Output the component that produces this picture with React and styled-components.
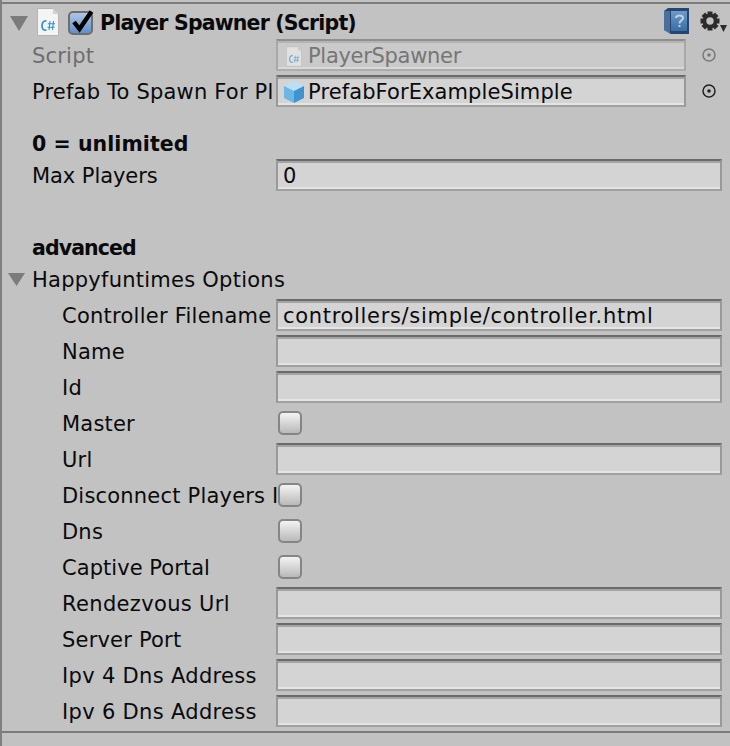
import React from "react";
import styled, { createGlobalStyle } from "styled-components";

const GlobalStyle = createGlobalStyle`
    html, body {
        margin: 0;
        padding: 0;
        background: #c2c2c2;
    }
    body {
        font-family: "DejaVu Sans", sans-serif;
        font-size: 21px;
        letter-spacing: 0.2px;
        color: #0a0a0a;
    }
`;

const Page = styled.div`
    width: 730px;
    height: 746px;
    box-sizing: border-box;
    overflow: hidden;
    padding-top: 2px;
    border-left: 2px solid #7f7f7f;
    background: #c2c2c2;
`;

const Component = styled.div`
    height: 731px;
    box-sizing: border-box;
    border-top: 2px solid #7c7c7c;
    border-bottom: 2px solid #7c7c7c;
`;

const Header = styled.div`
    height: 33px;
    box-sizing: border-box;
    padding-top: 2px;
    display: flex;
    align-items: center;
`;

const Title = styled.div`
    margin-left: 5px;
    padding-top: 2px;
    font-size: 20.5px;
    font-weight: bold;
    letter-spacing: -0.83px;
    white-space: nowrap;
    flex: 1;
`;

const HeaderIcon = styled.svg`
    display: block;
    flex: none;
`;

const Row = styled.div`
    height: 36px;
    display: flex;
    align-items: center;
    padding-left: ${(p) => (p.$indent ? 60 : 30)}px;
`;

const Label = styled.div`
    width: ${(p) => (p.$indent ? 214 : 244)}px;
    flex: none;
    padding-top: 2px;
    white-space: nowrap;
    letter-spacing: ${(p) => p.$tracking ?? 0.2}px;
    color: ${(p) => (p.$disabled ? "#6e6e6e" : "#0a0a0a")};
`;

const Field = styled.div`
    box-sizing: border-box;
    width: ${(p) => (p.$short ? 410 : 446)}px;
    height: 32px;
    flex: none;
    display: flex;
    align-items: center;
    gap: ${(p) => (p.$disabled ? 6 : 3)}px;
    padding: 2px 0 0 ${(p) => (p.$object ? (p.$disabled ? 8 : 5) : 5)}px;
    white-space: nowrap;
    letter-spacing: ${(p) => p.$tracking ?? 0}px;
    color: ${(p) => (p.$disabled ? "#767676" : "#0a0a0a")};
    background: ${(p) => (p.$disabled ? "#cacaca" : "#d4d4d4")};
    border: 2px solid ${(p) => (p.$disabled ? "#a8a8a8" : "#999999")};
    border-top-color: ${(p) => (p.$disabled ? "#8f8f8f" : "#6a6a6a")};
    border-bottom-color: ${(p) => (p.$disabled ? "#adadad" : "#a0a0a0")};
    box-shadow: inset 0 2px 0 ${(p) => (p.$disabled ? "#b4b4b4" : "#a4a4a4")},
        inset 0 -2px 0 ${(p) => (p.$disabled ? "#d8d8d8" : "#e4e4e4")};
`;

const Picker = styled.svg`
    display: block;
    flex: none;
    margin-left: 15px;
    opacity: ${(p) => (p.$disabled ? 0.45 : 1)};
`;

const Checkbox = styled.div`
    box-sizing: border-box;
    width: 24px;
    height: 24px;
    flex: none;
    margin-left: 2px;
    border: 2px solid #858585;
    border-radius: 5px;
    background: linear-gradient(#f3f3f3, #b9b9b9);
`;

const Heading = styled.div`
    height: 28px;
    margin-top: ${(p) => p.$top}px;
    padding: 2px 0 0 30px;
    box-sizing: border-box;
    display: flex;
    align-items: center;
    font-size: 20.5px;
    font-weight: bold;
    letter-spacing: ${(p) => p.$tracking}px;
`;

const FoldRow = styled.div`
    height: 36px;
    display: flex;
    align-items: center;
    gap: 7px;
    padding-left: 6px;
`;

const FoldLabel = styled.div`
    padding-top: 2px;
    letter-spacing: 0.25px;
`;

const HeaderGap = styled.span`
    flex: none;
    width: ${(p) => p.$width}px;
`;

function Triangle({ small }) {
    return (
        <HeaderIcon
            width={small ? 17 : 18}
            height={small ? 14 : 16}
            viewBox="0 0 18 16"
            preserveAspectRatio="none"
            style={{ marginTop: small ? 0 : 2 }}
        >
            <path d="M0 1 H18 L9 16 Z" fill="#7b7b7b" />
        </HeaderIcon>
    );
}

function ScriptIcon({ small }) {
    const w = small ? 16 : 22;
    const h = small ? 21 : 28;
    return (
        <HeaderIcon width={w} height={h} viewBox="0 0 22 28" style={{ opacity: small ? 0.55 : 1 }}>
            <path d="M0.5 0.5 H16 L21.5 6 V27.5 H0.5 Z" fill="#f4f4f4" stroke="#b5b5b5" />
            <path d="M16 0.5 V6 H21.5 Z" fill="#d2d2d2" />
            <path d="M9.5 13 C6 12.5 5 15 5 18 C5 21 6.5 22.5 9.5 22" fill="none" stroke="#2f93c4" strokeWidth="1.7" />
            <path d="M13 13 L12 22 M16.5 13 L15.5 22 M10.8 15.7 H18 M10.5 19.3 H17.6" fill="none" stroke="#2f93c4" strokeWidth="1.1" />
        </HeaderIcon>
    );
}

function EnabledBox() {
    return (
        <HeaderIcon width="27" height="26" viewBox="0 0 27 26" style={{ marginLeft: 9 }}>
            <defs>
                <linearGradient id="enabledFill" x1="0" y1="0" x2="0" y2="1">
                    <stop offset="0" stopColor="#b4c9e4" />
                    <stop offset="1" stopColor="#5f8dc6" />
                </linearGradient>
            </defs>
            <rect x="1" y="3" width="23" height="22" rx="4" fill="url(#enabledFill)" stroke="#6e6e6e" strokeWidth="2" />
            <path d="M6 13 L11.5 20 L23.5 2.5" fill="none" stroke="#000" strokeWidth="4.4" />
        </HeaderIcon>
    );
}

function BookIcon() {
    return (
        <HeaderIcon width="26" height="27" viewBox="0 0 26 27">
            <defs>
                <linearGradient id="bookFill" x1="0" y1="0" x2="0" y2="1">
                    <stop offset="0" stopColor="#6d9ac9" />
                    <stop offset="1" stopColor="#3a6da3" />
                </linearGradient>
            </defs>
            <path d="M0 3 L4 0 H25 V26 H7 L0 22 Z" fill="#24466f" />
            <rect x="7" y="3" width="16" height="20" fill="url(#bookFill)" />
            <path d="M0 3 L6 3 V26 L0 22 Z" fill="#5f86b3" opacity="0.65" />
            <path d="M12 10 C12 6.5 19 6.5 19 10 C19 12.5 15.5 12.5 15.5 15.5" fill="none" stroke="#bcd0e6" strokeWidth="2" />
            <rect x="14.5" y="17" width="2" height="2" fill="#bcd0e6" />
        </HeaderIcon>
    );
}

function GearIcon() {
    const teeth = [0, 45, 90, 135, 180, 225, 270, 315];
    return (
        <HeaderIcon width="28" height="26" viewBox="0 0 28 26" style={{ marginLeft: 10 }}>
            {teeth.map((a) => (
                <rect key={a} x="7.5" y="2.5" width="5" height="5" fill="#2c2c2c" transform={`rotate(${a} 10 12)`} />
            ))}
            <circle cx="10" cy="12" r="5.5" fill="none" stroke="#2c2c2c" strokeWidth="3.6" />
            <path d="M20 16 H27 L23.5 23 Z" fill="#2c2c2c" />
        </HeaderIcon>
    );
}

function PickerIcon({ disabled }) {
    return (
        <Picker $disabled={disabled} width="16" height="16" viewBox="0 0 16 16">
            <circle cx="8" cy="8" r="6" fill="none" stroke="#222" strokeWidth="1.5" />
            <circle cx="8" cy="8" r="1.8" fill="#222" />
        </Picker>
    );
}

function CubeIcon() {
    return (
        <HeaderIcon width="22" height="24" viewBox="0 0 22 24">
            <path d="M11 1 L21 6 L11 11 L1 6 Z" fill="#b9e0f6" />
            <path d="M1 6 L11 11 V23 L1 18 Z" fill="#6db6e4" />
            <path d="M21 6 L11 11 V23 L21 18 Z" fill="#3f93cf" />
        </HeaderIcon>
    );
}

const options = [
    { label: "Controller Filename", value: "controllers/simple/controller.html", fieldTracking: 0.68, tracking: 0.25 },
    { label: "Name" },
    { label: "Id" },
    { label: "Master", check: true },
    { label: "Url" },
    { label: "Disconnect Players I", check: true },
    { label: "Dns", check: true },
    { label: "Captive Portal", check: true, tracking: 0.05 },
    { label: "Rendezvous Url", tracking: 0.34 },
    { label: "Server Port" },
    { label: "Ipv 4 Dns Address", tracking: 0.32 },
    { label: "Ipv 6 Dns Address", tracking: 0.32 },
];

export default function App() {
    return (
        <Page>
            <GlobalStyle />
            <Component>
                <Header>
                    <HeaderGap $width={8} />
                    <Triangle />
                    <HeaderGap $width={9} />
                    <ScriptIcon />
                    <EnabledBox />
                    <Title>Player Spawner (Script)</Title>
                    <BookIcon />
                    <GearIcon />
                    <HeaderGap $width={2} />
                </Header>
                <Row>
                    <Label $disabled>Script</Label>
                    <Field $short $object $disabled $tracking={-0.3}>
                        <ScriptIcon small />
                        PlayerSpawner
                    </Field>
                    <PickerIcon disabled />
                </Row>
                <Row>
                    <Label>Prefab To Spawn For Pl</Label>
                    <Field $short $object $tracking={0.1}>
                        <CubeIcon />
                        PrefabForExampleSimple
                    </Field>
                    <PickerIcon />
                </Row>
                <Heading $top={20} $tracking={0.06}>0 = unlimited</Heading>
                <Row>
                    <Label $tracking={-0.07}>Max Players</Label>
                    <Field>0</Field>
                </Row>
                <Heading $top={40} $tracking={-0.9}>advanced</Heading>
                <FoldRow>
                    <Triangle small />
                    <FoldLabel>Happyfuntimes Options</FoldLabel>
                </FoldRow>
                {options.map((o) => (
                    <Row key={o.label} $indent>
                        <Label $indent $tracking={o.tracking}>{o.label}</Label>
                        {o.check ? <Checkbox /> : <Field $tracking={o.fieldTracking}>{o.value}</Field>}
                    </Row>
                ))}
            </Component>
        </Page>
    );
}
